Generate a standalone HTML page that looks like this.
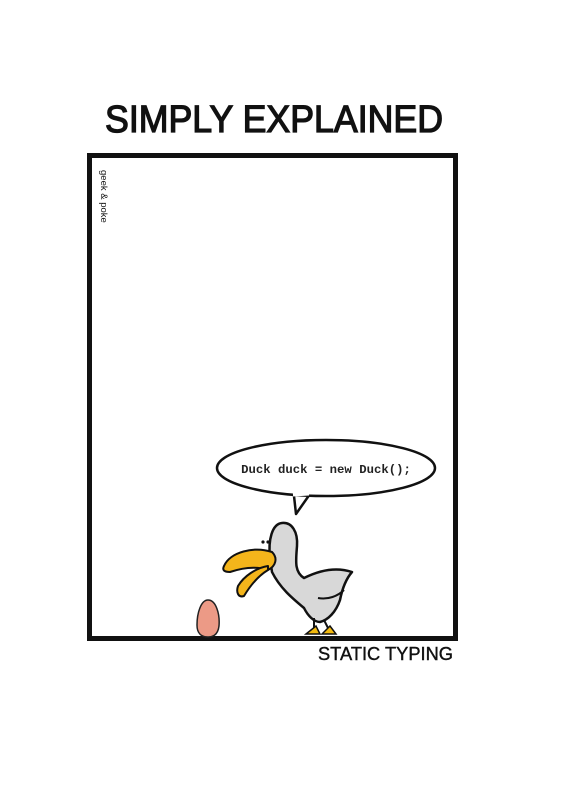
<!DOCTYPE html>
<html><head><meta charset="utf-8"><style>
html,body{margin:0;padding:0;background:#fff;}
body{width:564px;height:798px;position:relative;overflow:hidden;}
</style></head><body>
<svg width="564" height="798" viewBox="0 0 564 798" style="position:absolute;left:0;top:0">
<text x="274" y="132" text-anchor="middle" font-family="Liberation Sans, sans-serif" font-size="38" textLength="338" lengthAdjust="spacingAndGlyphs" fill="#111" stroke="#111" stroke-width="1.3">SIMPLY EXPLAINED</text>
<rect x="89.5" y="155.5" width="366" height="483" fill="none" stroke="#111" stroke-width="5"/>
<text transform="translate(101,170) rotate(90)" font-family="Liberation Sans, sans-serif" font-size="9.5" fill="#111">geek &amp; poke</text>
<path d="M294 496 L296 514 L310 494" fill="#fff" stroke="#111" stroke-width="2.5" stroke-linejoin="round"/>
<ellipse cx="326" cy="468" rx="109" ry="28" fill="#fff" stroke="#111" stroke-width="2.5"/>
<path d="M293 495 L309 494" stroke="#fff" stroke-width="3"/>
<text x="326" y="473" text-anchor="middle" font-family="Liberation Mono, monospace" font-weight="bold" font-size="12.3" fill="#222">Duck duck = new Duck();</text>
<path d="M208 600 C216 600 220 614 219 626 C218 634 214 637 208 637 C201 637 197 633 197 625 C197 613 201 600 208 600Z" fill="#ec9a86" stroke="#222" stroke-width="1.5"/>
<path d="M270 558 C268 540 272 524 282 523 C292 522 298 532 297 546 C296 560 294 572 304 578 C316 572 334 566 352 572 C345 580 342 590 340 600 C336 612 328 620 320 622 C314 622 308 616 304 608 C292 598 280 588 272 572 Z" fill="#d8d8d8" stroke="#111" stroke-width="2.5" stroke-linejoin="round"/>
<path d="M318 598 C328 600 338 596 344 590" fill="none" stroke="#111" stroke-width="2"/>
<path d="M314 618 L314 632 M324 620 L330 632" stroke="#111" stroke-width="2"/>
<path d="M306 634 L316 626 L320 634 Z M322 634 L330 626 L336 634 Z" fill="#f2b90f" stroke="#111" stroke-width="1.5"/>
<path d="M224 566 C230 552 254 546 272 552 C278 558 276 566 268 570 C256 566 242 568 230 572 C224 572 222 570 224 566 Z" fill="#f4b51b" stroke="#111" stroke-width="2" stroke-linejoin="round"/>
<path d="M268 570 C258 576 250 586 244 596 C238 598 236 592 238 586 C244 576 256 568 268 566Z" fill="#f4b51b" stroke="#111" stroke-width="2" stroke-linejoin="round"/>
<circle cx="263" cy="542" r="1.6" fill="#111"/><circle cx="268" cy="542" r="1.6" fill="#111"/>
<text x="453" y="660" text-anchor="end" font-family="Liberation Sans, sans-serif" font-size="18" textLength="135" lengthAdjust="spacingAndGlyphs" fill="#111" stroke="#111" stroke-width="0.4">STATIC TYPING</text>
</svg>
</body></html>
